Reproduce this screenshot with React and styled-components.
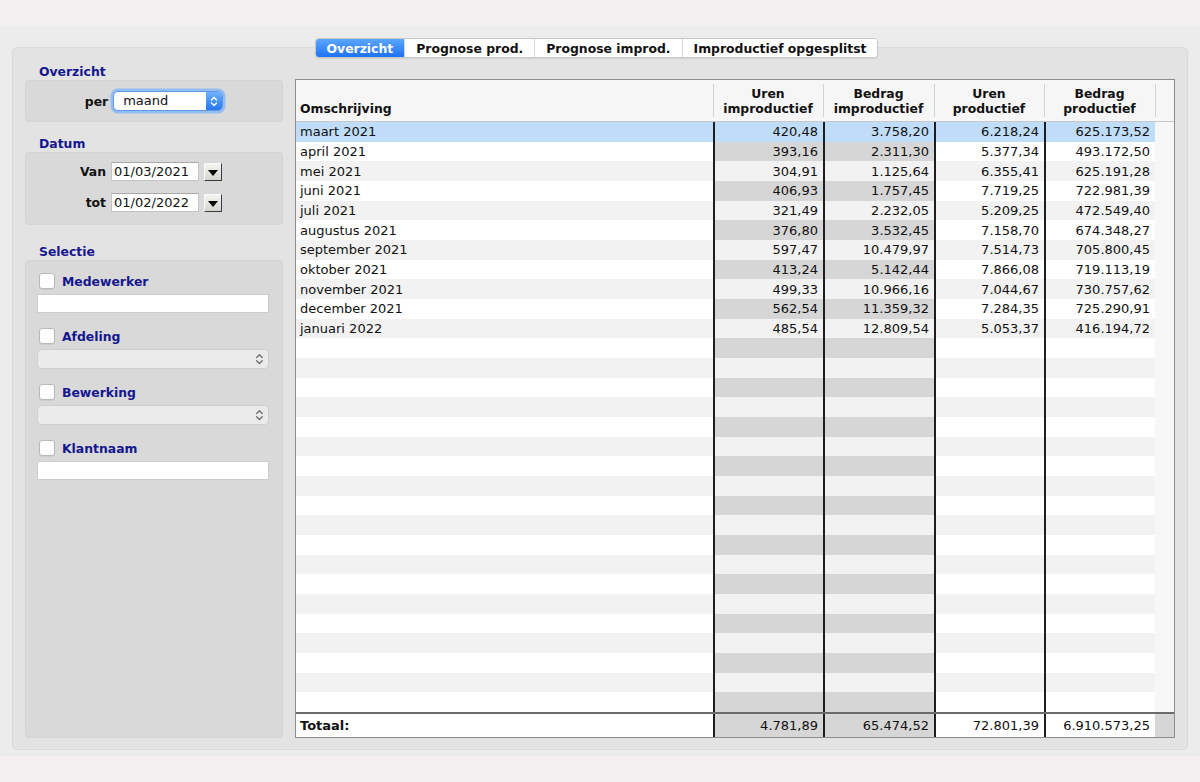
import styled, { createGlobalStyle } from "styled-components"

const GlobalStyle = createGlobalStyle`
  html, body {
    margin: 0;
    padding: 0;
    background: #f3eef0;
    font-family: "DejaVu Sans", "Liberation Sans", sans-serif;
    color: #111;
  }
  * { box-sizing: border-box; }
`

const rows = [
  ["maart 2021", "420,48", "3.758,20", "6.218,24", "625.173,52"],
  ["april 2021", "393,16", "2.311,30", "5.377,34", "493.172,50"],
  ["mei 2021", "304,91", "1.125,64", "6.355,41", "625.191,28"],
  ["juni 2021", "406,93", "1.757,45", "7.719,25", "722.981,39"],
  ["juli 2021", "321,49", "2.232,05", "5.209,25", "472.549,40"],
  ["augustus 2021", "376,80", "3.532,45", "7.158,70", "674.348,27"],
  ["september 2021", "597,47", "10.479,97", "7.514,73", "705.800,45"],
  ["oktober 2021", "413,24", "5.142,44", "7.866,08", "719.113,19"],
  ["november 2021", "499,33", "10.966,16", "7.044,67", "730.757,62"],
  ["december 2021", "562,54", "11.359,32", "7.284,35", "725.290,91"],
  ["januari 2022", "485,54", "12.809,54", "5.053,37", "416.194,72"],
]
const totals = ["4.781,89", "65.474,52", "72.801,39", "6.910.573,25"]
const ROW_COUNT = 30

const tabs = ["Overzicht", "Prognose prod.", "Prognose improd.", "Improductief opgesplitst"]
const columns = "1fr 110px 111px 110px 111px 19px"

const Page = styled.div`
  padding-top: 26px;
  height: 782px;
`

const Window = styled.div`
  height: 730px;
  background: #ececec;
  padding: 12px 12px 6px;
  display: flex;
  flex-direction: column;
`

const TabBar = styled.div`
  position: relative;
  z-index: 1;
  align-self: center;
  margin-left: -7px;
  display: flex;
  height: 20px;
  background: #fff;
  border: 1px solid #c8c8c8;
  border-radius: 4px;
  box-shadow: 0 1px 1px rgba(0, 0, 0, 0.08);
  overflow: hidden;
`

const Tab = styled.div`
  padding: 0 11px;
  display: flex;
  align-items: center;
  font-size: 12.4px;
  font-weight: bold;
  color: ${(p) => (p.$active ? "#fff" : "#111")};
  background: ${(p) => (p.$active ? "linear-gradient(#5aa7ff, #1f72f2)" : "#fff")};
  & + & {
    border-left: 1px solid #d6d6d6;
  }
`

const Panel = styled.div`
  flex: 1;
  margin-top: -11px;
  background: #e3e3e3;
  border: 1px solid #dadada;
  border-radius: 5px;
  padding: 16px 12px 11px;
  display: flex;
  gap: 12px;
`

const Sidebar = styled.div`
  width: 258px;
  display: flex;
  flex-direction: column;
`

const GroupTitle = styled.div`
  height: 16px;
  line-height: 16px;
  margin-top: ${(p) => p.$gap || 0}px;
  padding-left: 14px;
  font-size: 12.4px;
  font-weight: bold;
  color: #16168f;
`

const GroupBox = styled.div`
  background: #d9d9d9;
  border: 1px solid #d3d3d3;
  border-radius: 4px;
  ${(p) => p.$grow && "flex: 1;"}
`

const PerBox = styled(GroupBox)`
  height: 42px;
  display: flex;
  align-items: center;
  justify-content: center;
  gap: 5px;
`

const FieldLabel = styled.span`
  font-size: 12.4px;
  font-weight: bold;
  color: #111;
  text-align: right;
`

const PopUp = styled.div`
  width: 110px;
  height: 20px;
  display: flex;
  background: #fff;
  border: 1px solid #5f98e6;
  border-radius: 5px;
  box-shadow: 0 0 0 2.5px #94bdf2;
  overflow: hidden;
  span {
    flex: 1;
    padding-left: 9px;
    font-size: 13px;
    line-height: 18px;
  }
`

const PopUpArrows = styled.div`
  width: 16px;
  display: flex;
  align-items: center;
  justify-content: center;
  background: linear-gradient(#6fb2ff, #2376f0);
`

const DateGrid = styled(GroupBox)`
  height: 73px;
  display: grid;
  grid-template-columns: auto 88px 18px;
  justify-content: center;
  align-content: start;
  align-items: center;
  column-gap: 5px;
  row-gap: 12px;
  padding: 9px 6px 0 0;
`

const DateInput = styled.div`
  height: 19px;
  background: #fff;
  border: 1px solid #c4c4c4;
  border-top-color: #a9a9a9;
  padding-left: 2px;
  font-size: 13px;
  line-height: 17px;
`

const DropButton = styled.div`
  width: 18px;
  height: 18px;
  display: flex;
  align-items: center;
  justify-content: center;
  padding-top: 3px;
  background: linear-gradient(#f4f4f1, #d6d6d1);
  border: 1px solid;
  border-color: #fafafa #3a3a3a #3a3a3a #fafafa;
  &::after {
    content: "";
    border-left: 5px solid transparent;
    border-right: 5px solid transparent;
    border-top: 6px solid #000;
  }
`

const SelectionBox = styled(GroupBox)`
  padding: 10px 13px 0 11px;
  display: flex;
  flex-direction: column;
`

const Field = styled.div`
  display: flex;
  flex-direction: column;
  gap: 3px;
  & + & {
    margin-top: 13px;
  }
`

const CheckRow = styled.label`
  height: 20px;
  display: flex;
  align-items: center;
  gap: 7px;
  padding-left: 2px;
  font-size: 12.4px;
  font-weight: bold;
  color: #16168f;
`

const CheckBox = styled.span`
  width: 16px;
  height: 16px;
  background: #fff;
  border: 1px solid #b9b9b9;
  border-radius: 3px;
  box-shadow: 0 1px 1px rgba(0, 0, 0, 0.06);
`

const TextInput = styled.div`
  height: 19px;
  background: #fff;
  border: 1px solid #cdcdcd;
`

const DisabledSelect = styled.div`
  height: 20px;
  display: flex;
  justify-content: flex-end;
  align-items: center;
  padding-right: 4px;
  background: #ebebeb;
  border: 1px solid #cfcfcf;
  border-radius: 4px;
`

const Table = styled.div`
  flex: 1;
  margin-top: 15px;
  display: flex;
  flex-direction: column;
  background: #fff;
  border: 1px solid #8d8d8d;
`

const HeaderRow = styled.div`
  height: 42px;
  display: grid;
  grid-template-columns: ${columns};
  background: #f6f6f6;
  border-bottom: 1px solid #c8c8c8;
`

const HeaderCell = styled.div`
  display: flex;
  align-items: flex-end;
  justify-content: ${(p) => (p.$num ? "center" : "flex-start")};
  padding: 0 4px 5px;
  font-size: 12.4px;
  font-weight: bold;
  line-height: 15px;
  text-align: center;
  ${(p) =>
    p.$sep &&
    `background: linear-gradient(#d2d2d2, #d2d2d2) left 4px / 1px calc(100% - 8px) no-repeat;`}
`

const Body = styled.div`
  flex: 1;
  display: grid;
  grid-template-rows: repeat(${ROW_COUNT}, 1fr);
`

const Row = styled.div`
  display: grid;
  grid-template-columns: ${columns};
  ${(p) => p.$total && "height: 25px; border-top: 2px solid #6b6b6b;"}
`

const cellBg = (p) => {
  if (p.$selected) return "#bfdcf9"
  if (p.$improd && !p.$stripe) return "#d6d6d6"
  if (p.$stripe) return "#f2f2f2"
  return "#fff"
}

const Cell = styled.div`
  display: flex;
  align-items: center;
  justify-content: ${(p) => (p.$num ? "flex-end" : "flex-start")};
  padding: ${(p) => (p.$num ? "0 5px 0 0" : "0 0 0 4px")};
  font-size: 13px;
  font-weight: ${(p) => (p.$bold ? "bold" : "normal")};
  white-space: nowrap;
  background: ${cellBg};
  ${(p) => p.$num && "border-left: 2px solid #1e1e1e;"}
`

const ScrollCell = styled.div`
  background: ${(p) => (p.$total ? "#d6d6d6" : "#f7f7f7")};
`

const Chevrons = ({ color, size = 10 }) => (
  <svg width={size * 0.8} height={size * 1.3} viewBox="0 0 8 13" fill="none">
    <path d="M1.5 5 L4 2.5 L6.5 5" stroke={color} strokeWidth="1.4" strokeLinecap="round" strokeLinejoin="round" />
    <path d="M1.5 8 L4 10.5 L6.5 8" stroke={color} strokeWidth="1.4" strokeLinecap="round" strokeLinejoin="round" />
  </svg>
)

const SelectField = ({ label, select }) => (
  <Field>
    <CheckRow>
      <CheckBox />
      {label}
    </CheckRow>
    {select ? (
      <DisabledSelect>
        <Chevrons color="#777" size={11} />
      </DisabledSelect>
    ) : (
      <TextInput />
    )}
  </Field>
)

const App = () => {
  const body = Array.from({ length: ROW_COUNT }, (_, i) => rows[i] || ["", "", "", "", ""])

  return (
    <Page>
      <GlobalStyle />
      <Window>
        <TabBar>
          {tabs.map((t, i) => (
            <Tab key={t} $active={i === 0}>
              {t}
            </Tab>
          ))}
        </TabBar>
        <Panel>
          <Sidebar>
            <GroupTitle>Overzicht</GroupTitle>
            <PerBox>
              <FieldLabel>per</FieldLabel>
              <PopUp>
                <span>maand</span>
                <PopUpArrows>
                  <Chevrons color="#fff" size={10} />
                </PopUpArrows>
              </PopUp>
            </PerBox>

            <GroupTitle $gap={14}>Datum</GroupTitle>
            <DateGrid>
              <FieldLabel>Van</FieldLabel>
              <DateInput>01/03/2021</DateInput>
              <DropButton />
              <FieldLabel>tot</FieldLabel>
              <DateInput>01/02/2022</DateInput>
              <DropButton />
            </DateGrid>

            <GroupTitle $gap={19}>Selectie</GroupTitle>
            <SelectionBox $grow>
              <SelectField label="Medewerker" />
              <SelectField label="Afdeling" select />
              <SelectField label="Bewerking" select />
              <SelectField label="Klantnaam" />
            </SelectionBox>
          </Sidebar>

          <Table>
            <HeaderRow>
              <HeaderCell>Omschrijving</HeaderCell>
              <HeaderCell $num $sep>Uren<br />improductief</HeaderCell>
              <HeaderCell $num $sep>Bedrag<br />improductief</HeaderCell>
              <HeaderCell $num $sep>Uren<br />productief</HeaderCell>
              <HeaderCell $num $sep>Bedrag<br />productief</HeaderCell>
              <HeaderCell $sep />
            </HeaderRow>
            <Body>
              {body.map((r, i) => {
                const shared = { $stripe: i % 2 === 0, $selected: i === 0 }
                return (
                  <Row key={i}>
                    <Cell {...shared}>{r[0]}</Cell>
                    <Cell {...shared} $num $improd>{r[1]}</Cell>
                    <Cell {...shared} $num $improd>{r[2]}</Cell>
                    <Cell {...shared} $num>{r[3]}</Cell>
                    <Cell {...shared} $num>{r[4]}</Cell>
                    <ScrollCell />
                  </Row>
                )
              })}
            </Body>
            <Row $total>
              <Cell $bold>Totaal:</Cell>
              <Cell $num $improd>{totals[0]}</Cell>
              <Cell $num $improd>{totals[1]}</Cell>
              <Cell $num>{totals[2]}</Cell>
              <Cell $num>{totals[3]}</Cell>
              <ScrollCell $total />
            </Row>
          </Table>
        </Panel>
      </Window>
    </Page>
  )
}

export default App
